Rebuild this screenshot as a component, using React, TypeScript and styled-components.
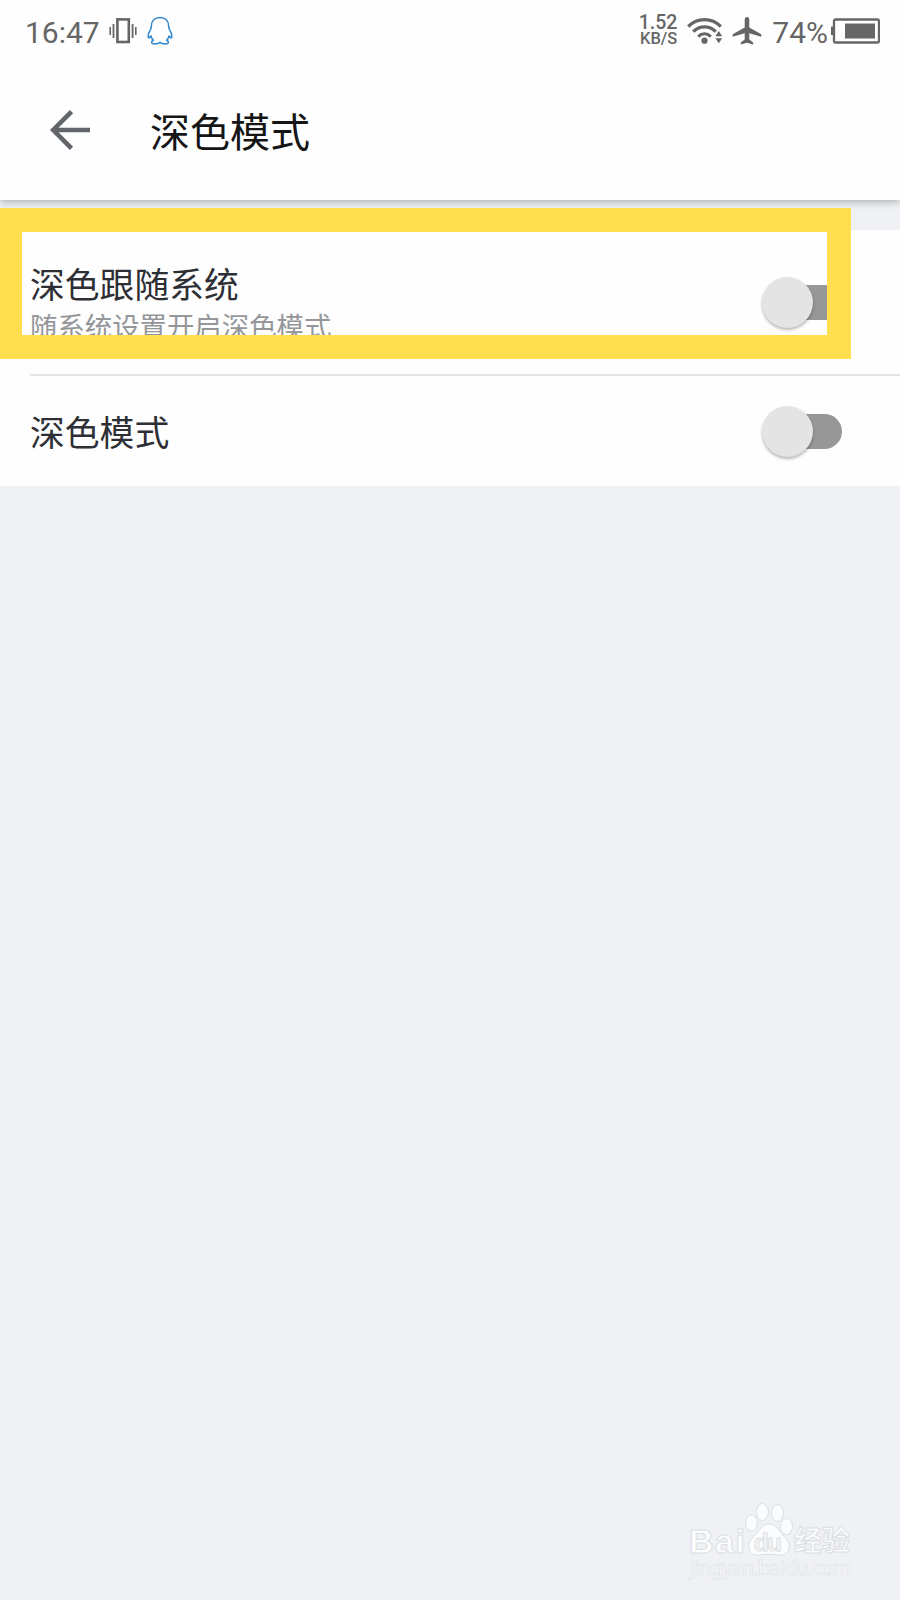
import React, { useState } from "react"
import styled, { createGlobalStyle } from "styled-components";


const GlobalStyle = createGlobalStyle`
    body {
        margin: 0;
        background: #EFF1F4;
        font-family: Roboto, "Noto Sans CJK SC", sans-serif;
    }
`

const Screen = styled.div`
    position: relative;
    display: flex;
    flex-direction: column;
    width: 900px;
    height: 1600px;
    overflow: hidden;
    background: #EFF1F4;
`

const TopArea = styled.header`
    height: 200px;
    background: #FEFEFE;
    box-shadow: 0 2px 8px rgba(0, 0, 0, 0.28);
`

const StatusBar = styled.div`
    display: flex;
    justify-content: space-between;
    height: 62px;
    padding: 0 20px 0 25px;
    color: #666;
`

const StatusGroup = styled.div`
    display: flex;
    align-items: center;
`

const StatusText = styled.span`
    font-size: 30px;
    line-height: 36px;
    padding-top: 3px;
`

const NetSpeed = styled.div`
    display: flex;
    flex-direction: column;
    align-items: flex-end;
    width: 42px;
    margin-right: 10px;
    font-weight: 500;
`

const SpeedLine = styled.span<{ $size: number }>`
    font-size: ${({ $size }) => $size}px;
    line-height: 16px;
    white-space: nowrap;
`

const Icon = styled.svg<{ $left?: number }>`
    display: block;
    flex: none;
    margin-left: ${({ $left = 0 }) => $left}px;
`

const TitleBar = styled.div`
    display: flex;
    align-items: center;
    height: 136px;
    padding-left: 50px;
`

const BackButton = styled.button`
    padding: 0;
    width: 40px;
    height: 40px;
    border: none;
    background: none;
    cursor: pointer;
`

const Title = styled.h1`
    margin: 0 0 0 60px;
    font-family: "Noto Sans CJK SC", sans-serif;
    font-size: 40px;
    line-height: 60px;
    font-weight: 400;
    color: #151515;
`

const SettingList = styled.main`
    margin-top: 30px;
    padding-left: 30px;
    background: #FEFEFE;
`

const SettingRow = styled.div<{ $height: number; $divider?: boolean }>`
    display: flex;
    align-items: center;
    justify-content: space-between;
    box-sizing: border-box;
    height: ${({ $height }) => $height}px;
    padding-right: 58px;
    border-bottom: ${({ $divider }) => ($divider ? "2px solid #E5E5E7" : "none")};
`

const SettingText = styled.div`
    display: flex;
    flex-direction: column;
    font-family: "Noto Sans CJK SC", sans-serif;
`

const SettingLabel = styled.span`
    font-size: 34.8px;
    line-height: 46px;
    color: #2D2F35;
`

const SettingHint = styled.span`
    font-size: 27.4px;
    line-height: 38px;
    color: #94969A;
`

const Track = styled.button<{ $on: boolean }>`
    display: flex;
    align-items: center;
    justify-content: ${({ $on }) => ($on ? "flex-end" : "flex-start")};
    width: 80px;
    height: 35px;
    padding: 0;
    border: none;
    border-radius: 18px;
    background: linear-gradient(#979797, #979797) right / 62px 35px no-repeat;
    cursor: pointer;
`

const Thumb = styled.span`
    flex: none;
    width: 51px;
    height: 51px;
    border-radius: 50%;
    background: #E4E4E4;
    box-shadow: 0 2px 3px rgba(0, 0, 0, 0.28);
`

const Highlight = styled.div`
    position: absolute;
    left: 0;
    top: 208px;
    box-sizing: border-box;
    width: 851px;
    height: 151px;
    border: solid #FFDF50;
    border-width: 24px 24px 24px 22px;
    pointer-events: none;
`

const Watermark = styled.svg`
    position: absolute;
    left: 680px;
    top: 1495px;
`

interface SwitchProps {
    label: string
}

const Switch = ({ label }: SwitchProps) => {
    const [on, setOn] = useState(false)

    return (
        <Track $on={on} role="switch" aria-checked={on} aria-label={label} onClick={() => setOn(!on)}>
            <Thumb />
        </Track>
    )
}

const VibrateIcon = () => (
    <Icon $left={9} width="28" height="28" viewBox="0 0 28 28" fill="none" stroke="#666">
        <rect x="8.4" y="2.4" width="11.4" height="22.6" strokeWidth="2.6" />
        <path d="M4.5 7v14M23.6 7v14" strokeWidth="1.8" />
        <path d="M1.2 10v8M26.8 10v8" strokeWidth="1.6" />
    </Icon>
)

const PenguinIcon = () => (
    <Icon $left={10} width="26" height="30" viewBox="0 0 26 30" fill="none" stroke="#2C87CF" strokeWidth="1.5" strokeLinejoin="round">
        <path d="M13 1.5C7.7 1.5 4.4 5 4.4 10c0 1.6-.3 2.3-.9 3.5C2 16.2 1 18.5 1.2 20.8c.2 1.6 1.2 1.3 2.8-.9.4 1.8 1.2 3.2 2.4 4.4-1.5.6-2 1.4-1.8 2.5.5 1.6 5.8 1.5 8.4-.4 2.6 1.9 7.9 2 8.4.4.2-1.1-.3-1.9-1.8-2.5 1.2-1.2 2-2.6 2.4-4.4 1.6 2.2 2.6 2.5 2.8.9.2-2.3-.8-4.6-2.3-7.3-.6-1.2-.9-1.9-.9-3.5 0-5-3.3-8.5-8.6-8.5Z" />
    </Icon>
)

const WifiIcon = () => (
    <Icon width="36" height="28" viewBox="0 0 36 28" fill="none" stroke="#666" strokeWidth="3.3">
        <path d="M1.2 9.5C10.5.3 24.5.3 33.8 9.5" />
        <path d="M6.2 14.6c6.5-6.3 16.1-6.3 22.6 0" />
        <path d="M11.2 19.6c3.8-3.6 8.8-3.6 12.6 0" />
        <circle cx="17.5" cy="23.7" r="3.1" fill="#666" stroke="none" />
        <path d="M28.4 19.2 31.8 14l3.4 5.2ZM28.4 21.2h6.8l-3.4 5Z" fill="#666" stroke="none" />
    </Icon>
)

const PlaneIcon = () => (
    <Icon $left={9} width="30" height="30" viewBox="0 0 30 30" fill="#666">
        <path d="M15 1c-1.6 0-2.3 1.3-2.3 3v7.4L.7 18.2v2.6l12-3.5v6.2l-3.9 3.1v1.9L15 26.8l6.2 1.7v-1.9l-3.9-3.1v-6.2l12 3.5v-2.6l-12-6.8V4c0-1.7-.7-3-2.3-3Z" />
    </Icon>
)

const BatteryIcon = () => (
    <Icon $left={2} width="50" height="26" viewBox="0 0 50 26">
        <path d="M1 8.5h3v8.5H1Z" fill="#666" />
        <rect x="4" y="1.5" width="45" height="23" rx="1.5" fill="none" stroke="#666" strokeWidth="2.3" />
        <rect x="15" y="5.5" width="30" height="15" fill="#666" />
    </Icon>
)

const BackArrow = () => (
    <Icon width="40" height="40" viewBox="0 0 40 40" fill="none" stroke="#62666A" strokeWidth="4.6">
        <path d="M21.5 1.6 3.2 20l18.3 18.4M3 20h37" />
    </Icon>
)

const BaiduWatermark = () => (
    <Watermark width="185" height="90" viewBox="0 0 185 90" fill="#FBFCFD" stroke="#DCDFE2" strokeWidth="1">
        <g fontFamily="Liberation Sans, sans-serif" fontWeight="700">
            <text x="9" y="58" fontSize="34" textLength="56">Bai</text>
            <ellipse cx="71.5" cy="28" rx="6" ry="8" />
            <ellipse cx="82.5" cy="17" rx="6" ry="8.5" />
            <ellipse cx="97.5" cy="18" rx="6" ry="8.5" />
            <ellipse cx="106.5" cy="31.5" rx="6" ry="8" />
            <path d="M89 29c-7 0-9 6-14 11-4 4-7 8-6 13 1 6 6 8 11 7 6-1 12-1 18 0 5 1 10-1 11-7 1-5-2-9-6-13-5-5-7-11-14-11Z" />
            <text x="74" y="56" fontSize="24" fill="#F4F5F7" textLength="28">du</text>
        </g>
        <text x="114" y="56" fontFamily="Noto Sans CJK SC, sans-serif" fontWeight="700" fontSize="28" textLength="56">经验</text>
        <text x="10" y="80" fontFamily="Noto Sans, sans-serif" fontSize="20" strokeWidth="0.6" textLength="161">jingyan.baidu.com</text>
    </Watermark>
)

export default function App() {
    return (
        <Screen>
            <GlobalStyle />
            <TopArea>
                <StatusBar>
                    <StatusGroup>
                        <StatusText>16:47</StatusText>
                        <VibrateIcon />
                        <PenguinIcon />
                    </StatusGroup>
                    <StatusGroup>
                        <NetSpeed>
                            <SpeedLine $size={19.5}>1.52</SpeedLine>
                            <SpeedLine $size={16.5}>KB/S</SpeedLine>
                        </NetSpeed>
                        <WifiIcon />
                        <PlaneIcon />
                        <StatusText style={{ marginLeft: 10 }}>74%</StatusText>
                        <BatteryIcon />
                    </StatusGroup>
                </StatusBar>
                <TitleBar>
                    <BackButton aria-label="返回">
                        <BackArrow />
                    </BackButton>
                    <Title>深色模式</Title>
                </TitleBar>
            </TopArea>
            <SettingList>
                <SettingRow $height={146} $divider>
                    <SettingText>
                        <SettingLabel>深色跟随系统</SettingLabel>
                        <SettingHint>随系统设置开启深色模式</SettingHint>
                    </SettingText>
                    <Switch label="深色跟随系统" />
                </SettingRow>
                <SettingRow $height={110}>
                    <SettingText>
                        <SettingLabel>深色模式</SettingLabel>
                    </SettingText>
                    <Switch label="深色模式" />
                </SettingRow>
            </SettingList>
            <Highlight />
            <BaiduWatermark />
        </Screen>
    )
}
